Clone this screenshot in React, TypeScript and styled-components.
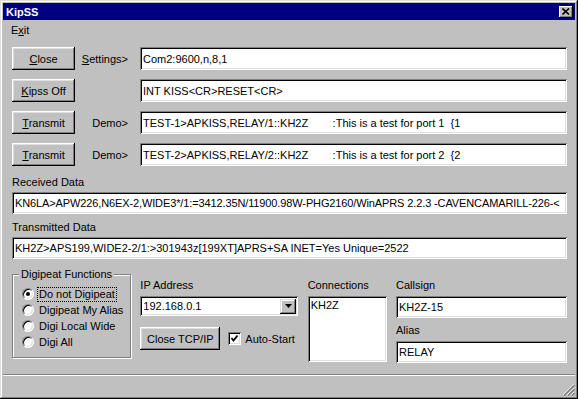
import styled, { createGlobalStyle } from 'styled-components'

const GlobalStyle = createGlobalStyle`
  html, body {
    margin: 0;
    padding: 0;
    background: #c0c0c0;
  }
  body {
    font-family: "Liberation Sans", Arial, sans-serif;
    font-size: 11px;
    color: #000;
  }
`

// 窓全体
const Window = styled.div`
  width: 578px;
  height: 399px;
  box-sizing: border-box;
  padding: 3px;
  background: #c0c0c0;
  display: flex;
  flex-direction: column;
  box-shadow: inset -1px -1px 0 #000, inset 1px 1px 0 #dfdfdf,
    inset -2px -2px 0 #808080, inset 2px 2px 0 #fff;
`

const TitleBar = styled.div`
  height: 17px;
  background: #000080;
  color: #fff;
  font-weight: bold;
  display: flex;
  align-items: center;
  justify-content: space-between;
  padding: 0 2px 0 3px;
`

const TitleClose = styled.div`
  width: 14px;
  height: 12px;
  background: #c0c0c0;
  display: flex;
  align-items: center;
  justify-content: center;
  box-shadow: inset -1px -1px 0 #000, inset 1px 1px 0 #fff,
    inset -2px -2px 0 #808080;
`

const MenuBar = styled.div`
  height: 20px;
  display: flex;
  align-items: center;
  padding-left: 8px;
`

const Body = styled.div`
  flex: 1;
  display: flex;
  flex-direction: column;
  padding: 7px 8px 0 9px;
`

const CommandGrid = styled.div`
  display: grid;
  grid-template-columns: 63px 65px 1fr;
  grid-auto-rows: 23px;
  row-gap: 9px;
`

const Button = styled.div<{ $w?: number; $h?: number }>`
  width: ${p => (p.$w ? `${p.$w}px` : 'auto')};
  height: ${p => (p.$h ? `${p.$h}px` : 'auto')};
  display: flex;
  align-items: center;
  justify-content: center;
  background: #c0c0c0;
  box-shadow: inset -1px -1px 0 #000, inset 1px 1px 0 #fff,
    inset -2px -2px 0 #808080, inset 2px 2px 0 #dfdfdf;
`

const RowLabel = styled.div`
  align-self: center;
  text-align: right;
  padding-right: 12px;
`

// 白い入力欄 (へこみ枠)
const Field = styled.div<{ $h: number; $tight?: boolean }>`
  height: ${p => p.$h}px;
  box-sizing: border-box;
  background: #fff;
  display: flex;
  align-items: center;
  padding: 0 3px;
  white-space: pre;
  overflow: hidden;
  letter-spacing: ${p => (p.$tight ? '-0.12px' : 'normal')};
  box-shadow: inset 1px 1px 0 #808080, inset -1px -1px 0 #fff,
    inset 2px 2px 0 #000, inset -2px -2px 0 #dfdfdf;
`

const Caption = styled.div<{ $mt: number }>`
  line-height: 13px;
  margin-top: ${p => p.$mt}px;
  margin-bottom: 3px;
`

const BottomGrid = styled.div`
  margin-top: 9px;
  display: flex;
  justify-content: space-between;
`

const GroupBox = styled.fieldset`
  width: 119px;
  height: 90px;
  box-sizing: border-box;
  margin: 0;
  padding: 5px 0 0 6px;
  min-width: 0;
  border: 1px solid #808080;
  box-shadow: inset 1px 1px 0 #fff, 1px 1px 0 #fff;
`

const Legend = styled.legend`
  padding: 0 2px;
  line-height: 13px;
  background: #c0c0c0;
`

const RadioRow = styled.div`
  height: 16px;
  display: flex;
  align-items: center;
  gap: 4px;
  padding-left: 3px;
`

const RadioDot = styled.span<{ $on?: boolean }>`
  width: 12px;
  height: 12px;
  box-sizing: border-box;
  border-radius: 50%;
  background: #fff;
  border: 1px solid;
  border-color: #808080 #fff #fff #808080;
  box-shadow: inset 1px 1px 0 #000, inset -1px -1px 0 #dfdfdf;
  display: flex;
  align-items: center;
  justify-content: center;
  &::after {
    content: '';
    width: 4px;
    height: 4px;
    border-radius: 50%;
    background: ${p => (p.$on ? '#000' : 'transparent')};
  }
`

const FocusText = styled.span<{ $focus?: boolean }>`
  padding: 0 1px;
  outline: ${p => (p.$focus ? '1px dotted #000' : 'none')};
  line-height: 13px;
`

const Column = styled.div<{ $w: number }>`
  width: ${p => p.$w}px;
  display: flex;
  flex-direction: column;
`

const ColLabel = styled.div<{ $mt: number }>`
  line-height: 13px;
  margin-top: ${p => p.$mt}px;
  margin-bottom: 4px;
`

const Combo = styled(Field)`
  padding: 0 2px 0 3px;
  justify-content: space-between;
`

const DropButton = styled.div`
  width: 16px;
  height: 15px;
  background: #c0c0c0;
  display: flex;
  align-items: center;
  justify-content: center;
  box-shadow: inset -1px -1px 0 #000, inset 1px 1px 0 #dfdfdf,
    inset -2px -2px 0 #808080, inset 2px 2px 0 #fff;
`

const TcpRow = styled.div`
  margin-top: 11px;
  display: flex;
  align-items: center;
  gap: 8px;
`

const CheckWrap = styled.label`
  display: flex;
  align-items: center;
  gap: 4px;
`

const CheckBox = styled.span`
  width: 13px;
  height: 13px;
  box-sizing: border-box;
  background: #fff;
  display: flex;
  align-items: center;
  justify-content: center;
  box-shadow: inset 1px 1px 0 #808080, inset -1px -1px 0 #fff,
    inset 2px 2px 0 #000, inset -2px -2px 0 #dfdfdf;
`

const ListBox = styled.div`
  height: 66px;
  box-sizing: border-box;
  background: #fff;
  padding: 3px 3px;
  line-height: 13px;
  box-shadow: inset 1px 1px 0 #808080, inset -1px -1px 0 #fff,
    inset 2px 2px 0 #000, inset -2px -2px 0 #dfdfdf;
`

const StatusBar = styled.div`
  height: 22px;
  box-sizing: border-box;
  border-top: 1px solid #808080;
  box-shadow: inset 0 1px 0 #fff;
  display: flex;
  justify-content: flex-end;
  align-items: flex-end;
`

const radios = ['Do not Digipeat', 'Digipeat My Alias', 'Digi Local Wide', 'Digi All']

export default function App() {
  return (
    <>
      <GlobalStyle />
      <Window>
        <TitleBar>
          <span>KipSS</span>
          <TitleClose>
            <svg width="8" height="7" viewBox="0 0 8 7">
              <path d="M0.5 0.5 L7 6.5 M7 0.5 L0.5 6.5" stroke="#000" strokeWidth="1.6" />
            </svg>
          </TitleClose>
        </TitleBar>
        <MenuBar>
          <span>
            E<u>x</u>it
          </span>
        </MenuBar>
        <Body>
          <CommandGrid>
            <Button>
              <span>
                <u>C</u>lose
              </span>
            </Button>
            <RowLabel>
              <u>S</u>ettings&gt;
            </RowLabel>
            <Field $h={23}>Com2:9600,n,8,1</Field>

            <Button>
              <span>
                <u>K</u>ipss Off
              </span>
            </Button>
            <RowLabel />
            <Field $h={23}>INT KISS&lt;CR&gt;RESET&lt;CR&gt;</Field>

            <Button>
              <span>
                <u>T</u>ransmit
              </span>
            </Button>
            <RowLabel>Demo&gt;</RowLabel>
            <Field $h={23}>{'TEST-1>APKISS,RELAY/1::KH2Z        :This is a test for port 1  {1'}</Field>

            <Button>
              <span>
                <u>T</u>ransmit
              </span>
            </Button>
            <RowLabel>Demo&gt;</RowLabel>
            <Field $h={23}>{'TEST-2>APKISS,RELAY/2::KH2Z        :This is a test for port 2  {2'}</Field>
          </CommandGrid>

          <Caption $mt={10}>Received Data</Caption>
          <Field $h={22} $tight>
            KN6LA&gt;APW226,N6EX-2,WIDE3*/1:=3412.35N/11900.98W-PHG2160/WinAPRS 2.2.3 -CAVENCAMARILL-226-&lt;
          </Field>
          <Caption $mt={7}>Transmitted Data</Caption>
          <Field $h={22}>KH2Z&gt;APS199,WIDE2-2/1:&gt;301943z[199XT]APRS+SA INET=Yes Unique=2522</Field>

          <BottomGrid>
            <GroupBox>
              <Legend>Digipeat Functions</Legend>
              {radios.map((r, i) => (
                <RadioRow key={r}>
                  <RadioDot $on={i === 0} />
                  <FocusText $focus={i === 0}>{r}</FocusText>
                </RadioRow>
              ))}
            </GroupBox>

            <Column $w={158}>
              <ColLabel $mt={11}>IP Address</ColLabel>
              <Combo $h={20}>
                <span>192.168.0.1</span>
                <DropButton>
                  <svg width="7" height="4" viewBox="0 0 7 4">
                    <path d="M0 0 H7 L3.5 4 Z" fill="#000" />
                  </svg>
                </DropButton>
              </Combo>
              <TcpRow>
                <Button $w={80} $h={23}>
                  Close TCP/IP
                </Button>
                <CheckWrap>
                  <CheckBox>
                    <svg width="9" height="9" viewBox="0 0 9 9">
                      <path d="M1.5 4 L3.5 6.5 L7.5 1.5" stroke="#000" strokeWidth="1.8" fill="none" />
                    </svg>
                  </CheckBox>
                  <span>Auto-Start</span>
                </CheckWrap>
              </TcpRow>
            </Column>

            <Column $w={79}>
              <ColLabel $mt={11}>Connections</ColLabel>
              <ListBox>KH2Z</ListBox>
            </Column>

            <Column $w={171}>
              <ColLabel $mt={11}>Callsign</ColLabel>
              <Field $h={22}>KH2Z-15</Field>
              <ColLabel $mt={6}>Alias</ColLabel>
              <Field $h={22}>RELAY</Field>
            </Column>
          </BottomGrid>
        </Body>
        <StatusBar>
          <svg width="13" height="13" viewBox="0 0 13 13">
            <path d="M12 1 L1 12 M12 5 L5 12 M12 9 L9 12" stroke="#fff" strokeWidth="1" />
            <path d="M12.5 2 L2 12.5 M12.5 6 L6 12.5 M12.5 10 L10 12.5" stroke="#808080" strokeWidth="1.6" />
          </svg>
        </StatusBar>
      </Window>
    </>
  )
}
